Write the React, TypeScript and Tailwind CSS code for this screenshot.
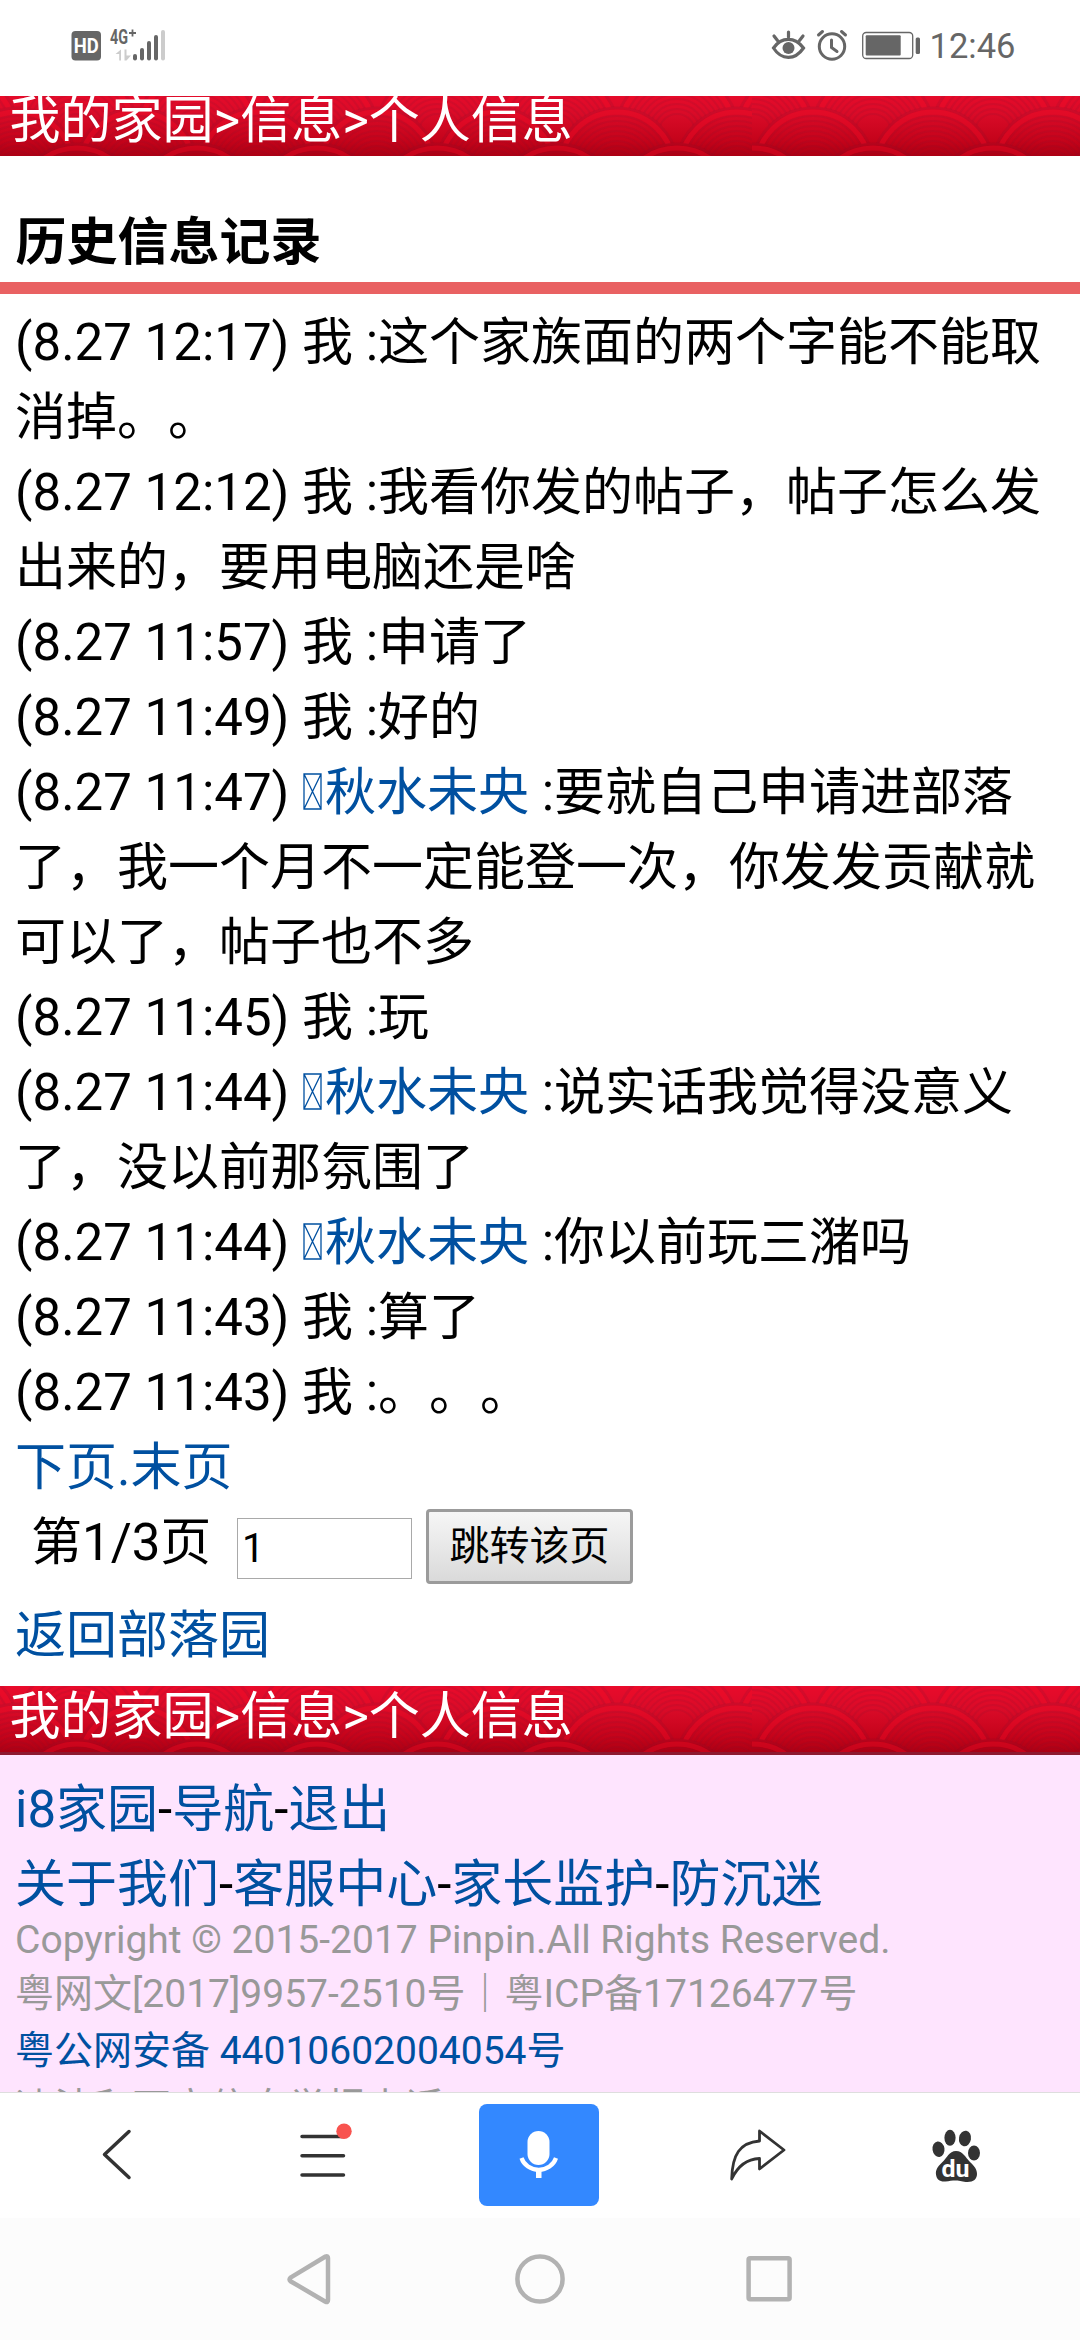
import type { ReactNode } from 'react';

interface Message {
  time: string
  text: string
  friend?: boolean
}

const messages: Message[] = [
  { time: '8.27 12:17', text: '这个家族面的两个字能不能取消掉。。' },
  { time: '8.27 12:12', text: '我看你发的帖子，帖子怎么发出来的，要用电脑还是啥' },
  { time: '8.27 11:57', text: '申请了' },
  { time: '8.27 11:49', text: '好的' },
  { time: '8.27 11:47', text: '要就自己申请进部落了，我一个月不一定能登一次，你发发贡献就可以了，帖子也不多', friend: true },
  { time: '8.27 11:45', text: '玩' },
  { time: '8.27 11:44', text: '说实话我觉得没意义了，没以前那氛围了', friend: true },
  { time: '8.27 11:44', text: '你以前玩三潴吗', friend: true },
  { time: '8.27 11:43', text: '算了' },
  { time: '8.27 11:43', text: '。。。' },
];

// Olas del fondo: cada fila tapa a la anterior
const rows = [-20, 17, 53];
const rings = [55, 50, 45, 40, 35, 30, 25, 20];

const Waves = ({ id }: { id: string }) => {
  const scales = (first: number, from: number, to: number) =>
    rows.flatMap((top, row) => {
      const items: ReactNode[] = [];
      for (let x = first - (row % 2 === 0 ? 60 : 0); x < to + 70; x += 120) {
        if (x < from - 70) continue;
        items.push(
          <g key={`${row}-${x}`}>
            <circle cx={x} cy={top + 62} r="62" fill={`url(#${id}-bg)`} />
            <circle cx={x} cy={top + 62} r="61" fill="none" stroke="#7d1030" strokeWidth="3" opacity="0.16" />
            <circle cx={x} cy={top + 62} r="57" fill="none" stroke="#f00a26" strokeWidth="5" opacity="0.36" />
            {rings.map((r) => (
              <circle key={r} cx={x} cy={top + 62} r={r - 2} fill="none" stroke="#7d1535" strokeWidth="2" opacity="0.14" />
            ))}
          </g>
        );
      }
      return items;
    });

  return (
    <svg className="absolute inset-0" width="1080" height="69" viewBox="0 0 1080 69">
      <defs>
        <linearGradient id={`${id}-bg`} gradientUnits="userSpaceOnUse" x1="0" y1="0" x2="0" y2="68">
          <stop offset="0" stopColor="#e90b2b" />
          <stop offset="0.35" stopColor="#d90b28" />
          <stop offset="0.75" stopColor="#c4031a" />
          <stop offset="1" stopColor="#a80013" />
        </linearGradient>
        <clipPath id={`${id}-l`}><rect width="752" height="69" /></clipPath>
        <clipPath id={`${id}-r`}><rect x="752" width="328" height="69" /></clipPath>
      </defs>
      <rect width="1080" height="69" fill={`url(#${id}-bg)`} />
      <g clipPath={`url(#${id}-l)`}>{scales(17, 0, 752)}</g>
      <g clipPath={`url(#${id}-r)`}>{scales(813, 752, 1080)}</g>
    </svg>
  );
};

const Banner = ({ id }: { id: string }) => (
  <div className="relative h-[69px] overflow-hidden">
    <Waves id={id} />
    <p className="relative pl-[9.5px] -mt-[7px] text-white">我的家园&gt;信息&gt;个人信息</p>
  </div>
);

const Friend = () => (
  <a className="text-[#0050a0]">
    <svg className="inline-block align-baseline ml-[1px] mr-[3px]" width="19" height="37" viewBox="0 0 19 37" fill="none" stroke="currentColor" strokeWidth="1.3">
      <path d="M1 1h17v35H1zM1 1 18 36M18 1 1 36" />
    </svg>
    秋水未央
  </a>
);

const StatusBar = () => (
  <header className="h-24 shrink-0 flex items-start justify-between pl-[71px] pt-[28px] text-[#666]">
    <svg width="96" height="34" viewBox="71 28 96 34" fill="#666">
      <rect x="71.5" y="31" width="29.5" height="29.5" rx="4" />
      <text x="86.2" y="52.7" textAnchor="middle" textLength="25" lengthAdjust="spacingAndGlyphs" fontSize="19.5" fontWeight="700" fill="#fff" fontFamily="Roboto, sans-serif">HD</text>
      <text x="110" y="43.5" textLength="18" lengthAdjust="spacingAndGlyphs" fontSize="20" fontWeight="700" fontFamily="Roboto, sans-serif">4G</text>
      <path d="M132.5 29.5v7M129 33h7" stroke="#666" strokeWidth="1.8" />
      <path d="M121 49.5v11h-1.8v-6.5h-3.7zM124.5 49.5h2v6h4.5l-4.5 5h-2z" fill="#ccc" />
      <rect x="133" y="54" width="4" height="6.5" rx="2" />
      <rect x="140" y="48" width="4" height="12.5" rx="2" />
      <rect x="147" y="41" width="4" height="19.5" rx="2" />
      <rect x="154" y="35" width="4" height="25.5" rx="2" />
      <rect x="161" y="30" width="4" height="30.5" rx="2" fill="#ccc" />
    </svg>
    <div className="flex">
      <svg width="152" height="34" viewBox="770 28 152 34" fill="none" stroke="#666" strokeLinecap="round">
        <path d="M773.5 48c8-11.5 21.5-11.5 30 0c-8.5 12.5-22 12.5-30 0z" strokeWidth="3.2" />
        <circle cx="788.5" cy="48" r="6" fill="#666" stroke="none" />
        <path d="M788.5 32v5M774 36l3.5 4.5M803 36l-3.5 4.5" strokeWidth="3.2" />
        <circle cx="832" cy="46.5" r="12.7" strokeWidth="3" />
        <path d="M831.5 40v7.5l5.5 4" strokeWidth="3" />
        <path d="M818.5 35l4-3.5M845.5 35l-4-3.5" strokeWidth="3" />
        <rect x="862.7" y="32.5" width="50" height="26" rx="3.5" strokeWidth="1.3" />
        <rect x="865.7" y="35.3" width="35" height="20.3" rx="1" fill="#666" stroke="none" />
        <rect x="915.7" y="37.5" width="4.3" height="16.5" rx="1.5" fill="#666" stroke="none" />
      </svg>
      <span className="w-[158px] pl-[7.5px] text-[34.5px] leading-[36px]">12:46</span>
    </div>
  </header>
);

const Toolbar = () => (
  <nav className="h-[126px] shrink-0 border-t border-[#dedede] bg-white flex items-start">
    <svg width="479" height="125" viewBox="0 2093 479 125" fill="none" stroke="#333" strokeWidth="3.5" strokeLinecap="round" strokeLinejoin="round">
      <path d="M129 2131.5 104.5 2154.5 129 2177.5" />
      <path d="M302 2136.5h41.5M302 2155.7h41.5M302 2174.9h41.5" />
      <circle cx="344" cy="2131.2" r="7.7" fill="#f8534f" stroke="none" />
    </svg>
    <button className="mt-[11px] w-[120px] h-[102px] rounded-[8px] bg-[#3388ff]">
      <svg width="120" height="102" viewBox="479 2104 120 102" fill="#fff">
        <rect x="527.5" y="2131" width="22" height="34" rx="11" />
        <path d="M521.5 2158a18 16.5 0 0 0 34.5 0" fill="none" stroke="#fff" strokeWidth="4.2" />
        <rect x="536" y="2170" width="5.5" height="8" />
      </svg>
    </button>
    <svg width="481" height="125" viewBox="599 2093 481 125">
      <path d="M759.5 2131l24.5 19-24.5 19v-10.5c-12 .5-22 8-27.8 20.5c.5-24 8-36.5 27.8-38z" fill="none" stroke="#333" strokeWidth="2.8" strokeLinejoin="round" />
      <g fill="#333">
        <ellipse cx="938.5" cy="2149.2" rx="6" ry="7.8" transform="rotate(-8 938.5 2149.2)" />
        <ellipse cx="950" cy="2137.8" rx="5.6" ry="8" />
        <ellipse cx="965" cy="2138.5" rx="6" ry="7.8" transform="rotate(10 965 2138.5)" />
        <ellipse cx="974" cy="2153" rx="6" ry="7.4" />
        <path d="M956 2151c-7 0-9 7-14 11.5c-5 4.5-6.5 8-6 12c.5 5 4 7.5 9.5 7c4-.5 6-1 10.5-1c4.5 0 6.5 1.5 11.5 1.5c6 0 9.5-3 9.5-8c0-5-2.5-7.5-7-12c-5-5-7-11-14-11z" />
      </g>
      <text x="955.5" y="2176.7" textAnchor="middle" textLength="28" lengthAdjust="spacingAndGlyphs" fontSize="24" fontWeight="700" fill="#fff" fontFamily="Roboto, sans-serif">du</text>
    </svg>
  </nav>
);

const SystemNav = () => (
  <nav className="h-[122px] shrink-0 bg-[#fcfcfc]">
    <svg width="1080" height="122" viewBox="0 2218 1080 122" fill="none" stroke="#b2b2b2" strokeWidth="4.5" strokeLinejoin="round">
      <path d="M325.5 2256.5q2.5-1 2.5 1.5v42q0 3-2.5 1.7l-35-20.5q-2-1.7 0-3.5z" />
      <circle cx="540" cy="2279" r="22.6" />
      <rect x="748.6" y="2258.3" width="41" height="41" rx="1.5" />
    </svg>
  </nav>
);

const App = () => {
  return (
    <div
      lang="zh-CN"
      className="w-[1080px] h-[2340px] overflow-hidden flex flex-col bg-white text-black text-[51px] leading-[75px] [text-spacing-trim:space-all] font-[Roboto,'Noto_Sans_CJK_SC',sans-serif]"
    >
      <StatusBar />
      <main className="h-[1996px] shrink-0 overflow-hidden">
        <div className="h-[60px] overflow-hidden">
          <div className="-mt-[6px]"><Banner id="top" /></div>
        </div>

        <h1 className="mt-[49px] h-[89px] pl-[15.5px] font-bold border-b-12 border-[#e96162]">历史信息记录</h1>

        <section className="px-[15px] pt-[11px]">
          {messages.map((m, i) => (
            <p key={i}>
              ({m.time}) {m.friend ? <Friend /> : '我'} :{m.text}
            </p>
          ))}
          <p className="text-[#0050a0]"><a>下页</a>.<a>末页</a></p>
          <form className="flex items-start h-[93px] pl-[16px]">
            <span className="w-[206px]">第1/3页</span>
            <input
              className="mt-[13px] w-[175px] h-[61px] border border-[#a9a9a9] pl-[4px] text-[40px]"
              defaultValue="1"
            />
            <button
              type="button"
              className="ml-[14px] mt-[4px] w-[207px] h-[75px] rounded-[4px] border-3 border-[#9b9b9b] bg-linear-to-b from-[#f6f6f6] to-[#dadada] text-[40px] leading-[68px]"
            >
              跳转该页
            </button>
          </form>
          <p className="h-[88px] text-[#0050a0]"><a>返回部落园</a></p>
        </section>

        <div className="relative">
          <Banner id="bottom" />
          <div className="absolute bottom-0 w-full h-[3px] bg-[#8e1a31]"></div>
        </div>

        <footer className="h-[400px] px-[15px] pt-[17px] bg-[#fee4fe]">
          <p>
            <a className="text-[#0050a0]">i8家园</a>-<a className="text-[#0050a0]">导航</a>-<a className="text-[#0050a0]">退出</a>
          </p>
          <p>
            <a className="text-[#0050a0]">关于我们</a>-<a className="text-[#0050a0]">客服中心</a>-<a className="text-[#0050a0]">家长监护</a>-<a className="text-[#0050a0]">防沉迷</a>
          </p>
          <div className="-mt-[10px] text-[39px] leading-[57px] text-[#999]">
            <p className="h-[54px]">Copyright © 2015-2017 Pinpin.All Rights Reserved.</p>
            <p>粤网文[2017]9957-2510号｜粤ICP备17126477号</p>
            <p className="text-[#0050a0]">粤公网安备 44010602004054号</p>
            <p>违法和不良信息举报电话</p>
          </div>
        </footer>
      </main>
      <Toolbar />
      <SystemNav />
    </div>
  );
};

export default App;
